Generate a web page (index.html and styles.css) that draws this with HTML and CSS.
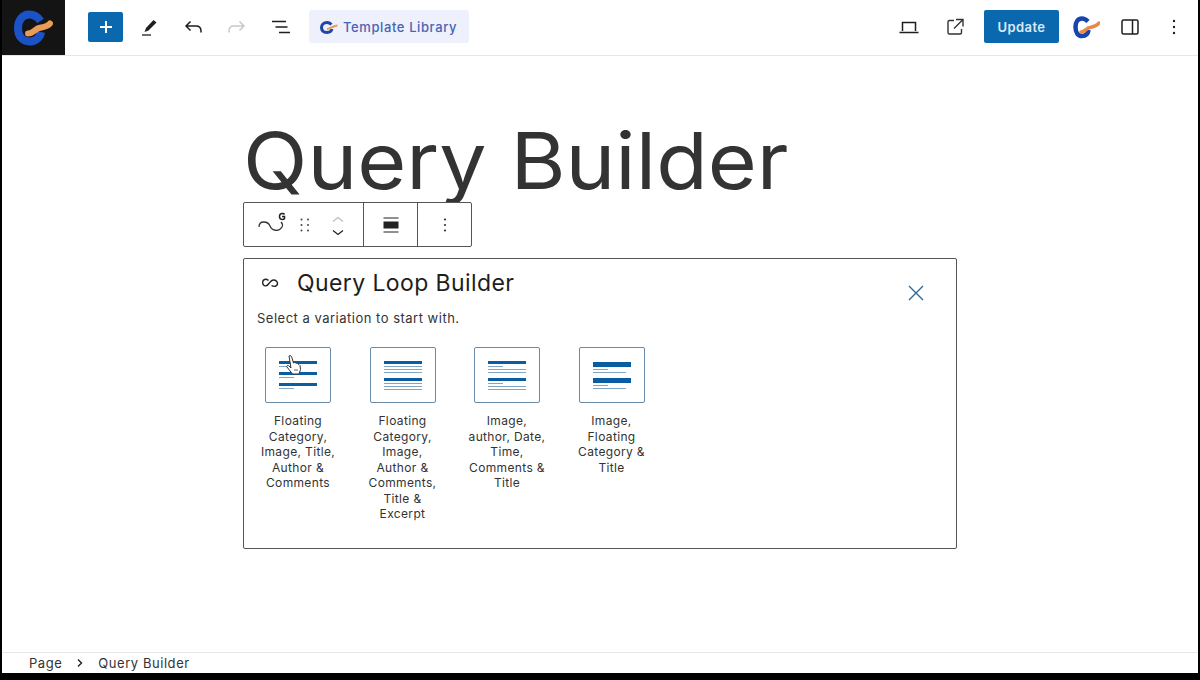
FILE: index.html
```html
<!DOCTYPE html>
<html lang="en">
<head>
<meta charset="utf-8">
<title>Query Builder</title>
<link rel="stylesheet" href="styles.css">
</head>
<body>
<div class="app">
  <header class="topbar">
    <div class="logo-box">
      <svg width="44" height="44" viewBox="0 0 44 44"><path d="M31.500 15C28 9.500 24 8.500 20 8.500C13 8.500 9 15 9 22C9 29.500 13 35.500 20.500 35.500C26 35.500 31 32 32 26" fill="none" stroke="#1b52c6" stroke-width="8"/><path d="M19 27.500C24 27.500 26 23 30 22C34 21 38 21 41 17.500" fill="none" stroke="#e89c55" stroke-width="6" stroke-linecap="round"/></svg>
    </div>
    <div class="tools-left">
      <button class="add-btn" aria-label="Add"><svg width="16" height="16" viewBox="0 0 16 16"><path d="M8 2v12M2 8h12" stroke="#fff" stroke-width="2"/></svg></button>
      <span class="ico"><svg width="24" height="24" viewBox="0 0 24 24"><path d="M19.500 7.500l-3-2.500-7.500 8-1.500 4 4-1.500z" fill="#1e1e1e"/><path d="M5 20h9" stroke="#1e1e1e" stroke-width="1.300"/></svg></span>
      <span class="ico"><svg width="24" height="24" viewBox="0 0 24 24"><path d="M20 17.500v-1.500c0-3-2-5-5-5H5.500M9.500 6.500L5 11l4.500 4.500" fill="none" stroke="#1e1e1e" stroke-width="1.500"/></svg></span>
      <span class="ico"><svg width="24" height="24" viewBox="0 0 24 24"><path d="M4 17.500v-1.500c0-3 2-5 5-5h9.500M14.500 6.500L19 11l-4.500 4.500" fill="none" stroke="#c9c9c9" stroke-width="1.500"/></svg></span>
      <span class="ico"><svg width="24" height="24" viewBox="0 0 24 24"><path d="M3 6.500h14M6.500 12h12M10 17.500h11" stroke="#1e1e1e" stroke-width="1.500"/></svg></span>
      <div class="template-btn">
        <svg width="20" height="20" viewBox="0 0 20 20"><path d="M12.500 7.500C11 6 10 5.500 8 5.500C4.500 5.500 2.500 8 2.500 10.500C2.500 13.500 4.500 15.500 8 15.500C10.500 15.500 12.500 14 13 12" fill="none" stroke="#1d46a8" stroke-width="3"/><path d="M8 12C11 12 13 9 18.500 8.500" fill="none" stroke="#e89a50" stroke-width="2"/></svg>
        <span>Template Library</span>
      </div>
    </div>
    <div class="tools-right">
      <span class="ico"><svg width="24" height="24" viewBox="0 0 24 24"><path d="M5.500 16V7.500h13V16M2.500 17.500h19" fill="none" stroke="#1e1e1e" stroke-width="1.500"/></svg></span>
      <span class="ico"><svg width="24" height="24" viewBox="0 0 24 24"><path d="M11 5.500H6.500a1.500 1.500 0 0 0-1.500 1.500v10.500a1.500 1.500 0 0 0 1.500 1.500H17a1.500 1.500 0 0 0 1.500-1.500V14M13 4.500h7v7M20 4.500l-9 9" fill="none" stroke="#333" stroke-width="1.400"/></svg></span>
      <button class="update-btn">Update</button>
      <span class="ico"><svg width="30" height="30" viewBox="0 0 30 30"><path d="M18 9.500C16 7.500 14 6.500 12 6.500C8 6.500 5.500 10 5.500 15C5.500 20.500 8 24 12 24C15.500 24 18 22 18.500 18" fill="none" stroke="#1845ad" stroke-width="4.500"/><path d="M11 20C15 20 16 16 20 15.500C23 15 26 14.500 29 11" fill="none" stroke="#e8894a" stroke-width="3.500" stroke-linecap="round"/></svg></span>
      <span class="ico"><svg width="24" height="24" viewBox="0 0 24 24"><rect x="4" y="5" width="16" height="14" rx="1.500" fill="none" stroke="#1e1e1e" stroke-width="1.500"/><path d="M14.500 5v14" stroke="#1e1e1e" stroke-width="1.500"/></svg></span>
      <span class="ico"><svg width="24" height="24" viewBox="0 0 24 24"><circle cx="12" cy="6" r="1.200" fill="#1e1e1e"/><circle cx="12" cy="12" r="1.200" fill="#1e1e1e"/><circle cx="12" cy="18" r="1.200" fill="#1e1e1e"/></svg></span>
    </div>
  </header>

  <main class="canvas">
    <div class="content">
      <h1 class="page-title">Query Builder</h1>
      <div class="block-toolbar">
        <div class="tb-cell tb-first">
          <svg class="tb-loop" width="30" height="26" viewBox="0 0 30 26"><path d="M2 17c0-7 9-6 11-1 2 5 9 6 12 1 1-2 0-4-1-5" fill="none" stroke="#333" stroke-width="1.300"/><path d="M27.500 4.500C26.500 2.800 22.500 3 22.500 6.500S26.500 10 27.500 8.500V6.500H25" fill="none" stroke="#222" stroke-width="1.500"/></svg>
          <svg class="tb-drag" width="12" height="16" viewBox="0 0 12 16"><g fill="#444"><circle cx="2.500" cy="2.500" r="1"/><circle cx="9" cy="2.500" r="1"/><circle cx="2.500" cy="8" r="1"/><circle cx="9" cy="8" r="1"/><circle cx="2.500" cy="13.500" r="1"/><circle cx="9" cy="13.500" r="1"/></g></svg>
          <div class="tb-arrows">
            <svg width="14" height="8" viewBox="0 0 14 8"><path d="M2 6.500l5-4 5 4" fill="none" stroke="#bbb" stroke-width="1.200"/></svg>
            <svg width="14" height="8" viewBox="0 0 14 8"><path d="M2 1.500l5 4 5-4" fill="none" stroke="#222" stroke-width="1.300"/></svg>
          </div>
        </div>
        <div class="tb-cell tb-align">
          <svg width="18" height="18" viewBox="0 0 18 18"><path d="M1.500 2h15M1.500 16h15" stroke="#222" stroke-width="1.200"/><rect x="1.500" y="5.500" width="15" height="7" fill="#222"/></svg>
        </div>
        <div class="tb-cell tb-more">
          <svg width="6" height="16" viewBox="0 0 6 16"><circle cx="3" cy="2.500" r="1.100" fill="#333"/><circle cx="3" cy="8" r="1.100" fill="#333"/><circle cx="3" cy="13.500" r="1.100" fill="#333"/></svg>
        </div>
      </div>

      <section class="placeholder">
        <div class="ph-head">
          <svg class="ph-icon" width="20" height="12" viewBox="0 0 20 12"><path d="M8.500 3.500C7 2.200 5.500 2 4.500 2.500 2.500 3.300 2 6 3.500 8 5 9.500 7 9 8.500 7 10 5 11.500 3 13.500 3 16 3 17.800 5 17.500 7 17 9.500 14 10 11.500 8.500" fill="none" stroke="#222" stroke-width="1.400"/></svg>
          <h2 class="ph-title">Query Loop Builder</h2>
          <svg class="ph-close" width="16" height="16" viewBox="0 0 16 16"><path d="M1 1l14 14M15 1L1 15" stroke="#2a6a99" stroke-width="1.400"/></svg>
        </div>
        <p class="ph-sub">Select a variation to start with.</p>
        <div class="variations">
          <div class="variation">
            <div class="thumb">
              <div class="t-group"><i class="bar"></i><i class="line short"></i></div>
              <div class="t-group"><i class="bar"></i><i class="line short"></i></div>
              <div class="t-group"><i class="bar"></i><i class="line short"></i></div>
              <svg class="cursor" width="20" height="22" viewBox="0 0 20 22"><path d="M5 2c1.500-1 2.500 0 3 2l1.500 5 1-.5 1.500.5 1.500.5 1.500 1 1 1 .5 4-1.500 4.500H8.500L3 13c-1-1.500 1-2 2-1l2 2z" fill="#fff" stroke="#333" stroke-width="1"/><path d="M10 16h4" stroke="#999" stroke-width="1.500"/></svg>
            </div>
            <p class="v-label">Floating Category, Image, Title, Author &amp; Comments</p>
          </div>
          <div class="variation">
            <div class="thumb">
              <div class="t-group"><i class="bar thin"></i><i class="line"></i><i class="line"></i><i class="line"></i></div>
              <div class="t-group"><i class="bar thin"></i><i class="line"></i><i class="line"></i><i class="line"></i></div>
            </div>
            <p class="v-label">Floating Category, Image, Author &amp; Comments, Title &amp; Excerpt</p>
          </div>
          <div class="variation">
            <div class="thumb">
              <div class="t-group"><i class="bar thin"></i><i class="line short"></i><i class="line"></i><i class="line"></i></div>
              <div class="t-group"><i class="bar thin"></i><i class="line short"></i><i class="line"></i><i class="line"></i></div>
            </div>
            <p class="v-label">Image, author, Date, Time, Comments &amp; Title</p>
          </div>
          <div class="variation">
            <div class="thumb">
              <div class="t-group"><i class="bar thick"></i><i class="line short"></i><i class="line mid"></i></div>
              <div class="t-group"><i class="bar thick"></i><i class="line short"></i><i class="line mid"></i></div>
            </div>
            <p class="v-label">Image, Floating Category &amp; Title</p>
          </div>
        </div>
      </section>
    </div>
  </main>

  <footer class="crumbs">
    <span>Page</span>
    <svg width="8" height="10" viewBox="0 0 8 10"><path d="M2 1.500L5.500 5 2 8.500" fill="none" stroke="#222" stroke-width="1.400"/></svg>
    <span>Query Builder</span>
  </footer>
</div>
</body>
</html>
```
FILE: styles.css
```css
* { box-sizing: border-box; }
html, body { margin: 0; height: 100%; }
body {
  background: #000;
  font-family: "Inter", "Liberation Sans", sans-serif;
  color: #1e1e1e;
  overflow: hidden;
}
.app {
  margin: 0 2px;
  height: 673px;
  background: #fff;
  display: flex;
  flex-direction: column;
}
.topbar {
  height: 56px;
  flex: none;
  display: flex;
  align-items: center;
  border-bottom: 1px solid #e6e6e6;
  padding-right: 2px;
}
.logo-box {
  width: 63px;
  height: 55px;
  background: #141414;
  display: flex;
  align-items: center;
  justify-content: flex-start;
  flex: none;
  padding-left: 7px;
}
.tools-left { display: flex; align-items: center; margin: 0 0 2px 23px; }
.add-btn {
  width: 35px;
  height: 30px;
  background: #0a69ae;
  border: 0;
  border-radius: 2px;
  padding: 0;
  margin-right: 4px;
  display: flex;
  align-items: center;
  justify-content: center;
}
.ico {
  width: 44px;
  height: 32px;
  display: flex;
  align-items: center;
  justify-content: center;
  flex: none;
}
.template-btn {
  display: flex;
  align-items: center;
  gap: 4px;
  width: 160px;
  height: 33px;
  margin-left: 6px;
  padding-left: 10px;
  background: #eef1fb;
  border-radius: 3px;
  color: #4863b5;
  font-size: 13px;
  font-weight: 500;
  letter-spacing: .6px;
}
.tools-right { display: flex; align-items: center; margin: 0 0 2px auto; }
.tools-right .ico { width: 44px; }
.tools-right .ico:nth-child(-n+2), .tools-right .ico:nth-child(4) { width: 46px; }
.update-btn {
  width: 75px;
  height: 33px;
  margin: 0 3px 0 6px;
  background: #0a69ae;
  border: 0;
  border-radius: 2px;
  color: #dbe9f5;
  font-family: inherit;
  font-size: 13px;
  font-weight: 600;
  letter-spacing: .4px;
}
.canvas { flex: 1; display: flex; justify-content: center; min-height: 0; }
.content { width: 714px; }
.page-title {
  margin: 63px 0 0 0;
  height: 83px;
  font-size: 78px;
  line-height: 83px;
  font-weight: 400;
  color: #333;
  white-space: nowrap;
  transform: scaleX(1.08);
  transform-origin: left center;
}
.block-toolbar {
  position: relative;
  width: 229px;
  height: 45px;
  display: flex;
  border: 1px solid #555;
  border-radius: 2px;
  background: #fff;
}
.tb-cell {
  display: flex;
  align-items: center;
  justify-content: center;
  border-right: 1px solid #555;
}
.tb-first { width: 120px; justify-content: flex-start; padding-left: 13px; }
.tb-loop { margin-top: -3px; }
.tb-drag { margin-left: 12px; }
.tb-arrows { display: flex; flex-direction: column; gap: 6px; margin-left: 20px; margin-top: 2px; }
.tb-align { width: 54px; }
.tb-more { flex: 1; border-right: 0; }
.placeholder {
  margin-top: 11px;
  height: 291px;
  border: 1px solid #555;
  border-radius: 2px;
  padding: 0 13px;
}
.ph-head { display: flex; align-items: center; height: 47px; padding-left: 3px; }
.ph-icon { flex: none; }
.ph-title {
  margin: 2px 0 0 17px;
  font-size: 23px;
  font-weight: 400;
  letter-spacing: .4px;
  color: #1e1e1e;
  line-height: 47px;
}
.ph-close { margin-left: auto; margin-right: 19px; margin-top: 20px; }
.ph-sub {
  margin: 3px 0 0;
  font-size: 13px;
  line-height: 18px;
  letter-spacing: .5px;
  color: #333;
}
.variations { display: flex; margin-top: 20px; margin-left: 8px; }
.variation { width: 66px; margin-right: 38.500px; flex: none; }
.thumb {
  position: relative;
  width: 66px;
  height: 56px;
  border: 1px solid #6a8aa5;
  border-radius: 2px;
  display: flex;
  flex-direction: column;
  justify-content: center;
  gap: 5px;
  padding: 0 13px;
}
.t-group { display: flex; flex-direction: column; gap: 2px; }
.bar { display: block; height: 3px; background: #0a5da0; }
.bar.thin { height: 3px; }
.bar.thick { height: 5px; }
.line { display: block; height: 1px; background: #7ea6c6; }
.line.short { width: 40%; }
.line.mid { width: 88%; }
.cursor { position: absolute; left: 18px; top: 6px; }
.v-label {
  margin: 10px -7px 0;
  text-align: center;
  font-size: 12px;
  line-height: 15.500px;
  letter-spacing: .35px;
  color: #333;
}
.crumbs {
  flex: none;
  height: 21px;
  display: flex;
  align-items: center;
  gap: 14px;
  padding-left: 27px;
  border-top: 1px solid #e6e6e6;
  font-size: 13px;
  letter-spacing: .55px;
  color: #333;
}
```
